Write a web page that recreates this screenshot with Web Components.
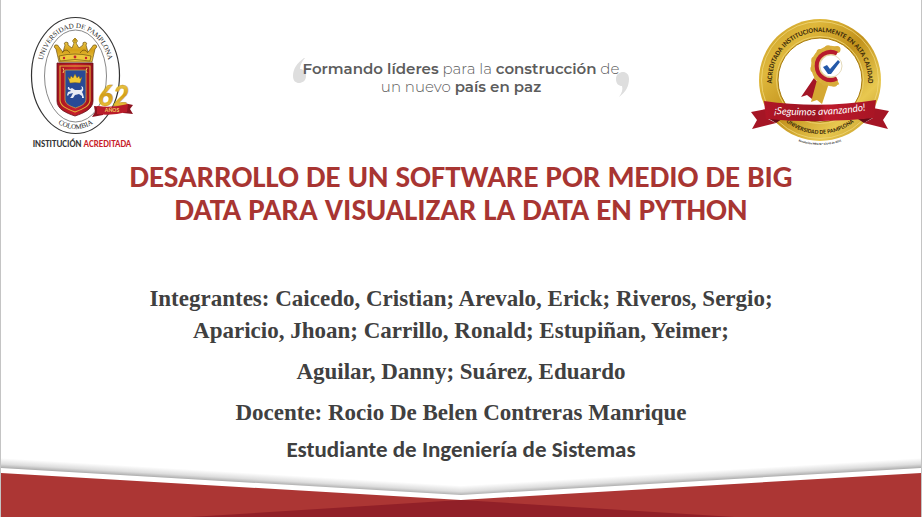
<!DOCTYPE html>
<html lang="es">
<head>
<meta charset="utf-8">
<title>Desarrollo de un software por medio de Big Data</title>
<style>
body{margin:0;background:#fff;font-family:"Liberation Serif",serif;color:#404040}
</style>
</head>
<body>
<title-slide>
  <slide-header slot="header">
    <university-crest></university-crest>
    <slide-motto><b>Formando líderes</b> para la <b>construcción</b> de<br>un nuevo <b>país en paz</b></slide-motto>
    <accreditation-seal></accreditation-seal>
  </slide-header>
  <slide-title>DESARROLLO DE UN SOFTWARE POR MEDIO DE BIG<br>DATA PARA VISUALIZAR LA DATA EN PYTHON</slide-title>
  <slide-credits>
    <p>Integrantes: Caicedo, Cristian; Arevalo, Erick; Riveros, Sergio;<br>Aparicio, Jhoan; Carrillo, Ronald; Estupiñan, Yeimer;</p>
    <p>Aguilar, Danny; Suárez, Eduardo</p>
    <p>Docente: Rocio De Belen Contreras Manrique</p>
    <span slot="role">Estudiante de Ingeniería de Sistemas</span>
  </slide-credits>
  <slide-footer slot="footer"></slide-footer>
</title-slide>
<script>
const define = (name, html) => customElements.define(name, class extends HTMLElement {
  constructor() {
    super();
    this.attachShadow({ mode: 'open' }).innerHTML = html;
  }
});

define('title-slide', `
<style>
:host{display:flex;flex-direction:column;min-height:100vh;box-sizing:border-box;border:solid #c4c4c4;border-width:0 1px;background:#fff}
main{flex:1}
</style>
<slot name="header"></slot><main><slot></slot></main><slot name="footer"></slot>`);

define('slide-header', `
<style>
:host{display:grid;grid-template-columns:1fr auto 1fr;align-items:start;padding:10px 24px 0}
::slotted(:last-child){justify-self:end}
</style>
<slot></slot>`);

define('slide-motto', `
<style>
:host{display:block;position:relative;isolation:isolate;margin-top:50px;padding:0 10px;text-align:center;font:300 15px/18px Montserrat,Inter,sans-serif;color:#5c5c5c}
::slotted(b){font-weight:600}
svg{position:absolute;width:14px;height:28px;fill:#dedede;z-index:-1}
.open{left:0;top:-3px}
.close{right:0;bottom:-2px}
</style>
<svg class="open" viewBox="0 0 14 28" aria-hidden="true"><path d="M11 1C4 6 0 12 0 19c0 5 3 7 6 7s7-2 7-7-3-7-6-7c0-4 2-8 5-11z"/></svg>
<slot></slot>
<svg class="close" viewBox="0 0 14 28" aria-hidden="true"><path d="M4 27c7-5 10-11 10-18 0-5-3-7-6-7S1 4 1 9s3 7 6 7c1 3 0 7-3 11z"/></svg>`);

define('university-crest', `
<style>:host{display:block}svg{display:block;width:115px;height:145px}</style>
<svg viewBox="25 10 115 145" role="img" aria-label="Universidad de Pamplona, 62 años">
<defs>
<linearGradient id="g" x1="0" x2="0" y1="0" y2="1"><stop offset="0" stop-color="#f6dc62"/><stop offset=".5" stop-color="#d4a018"/><stop offset="1" stop-color="#f0cd4a"/></linearGradient>
<linearGradient id="r" x1="0" x2="1" y1="0" y2="0"><stop offset="0" stop-color="#a31220"/><stop offset=".5" stop-color="#c8202c"/><stop offset="1" stop-color="#98101c"/></linearGradient>
<path id="up" d="M40.500 77A35 49 0 0 1 110.500 77"/>
<path id="dn" d="M36.500 76A39 53 0 0 0 114.500 76"/>
</defs>
<ellipse cx="75.500" cy="75.500" rx="44" ry="58" fill="#fff" stroke="#333" stroke-width="1.200"/>
<ellipse cx="75.500" cy="76" rx="31" ry="46" fill="#fff" stroke="#555" stroke-width=".7"/>
<g font-family="Liberation Serif,serif" font-size="7" fill="#222" text-anchor="middle">
<text><textPath href="#up" startOffset="50%">UNIVERSIDAD DE PAMPLONA</textPath></text>
<text><textPath href="#dn" startOffset="50%">COLOMBIA</textPath></text></g>
<path d="M57 63h36v38c0 8-9 12-18 15-9-3-18-7-18-15z" fill="url(#r)" stroke="#641018" stroke-width=".8"/>
<path d="M60 66h30v34c0 6-7 9-15 12-8-3-15-6-15-12z" fill="none" stroke="#e3b23a" stroke-width="1.100"/>
<path d="M63 68q2 3 0 5M87 68q-2 3 0 5" fill="none" stroke="#f0c860"/>
<path d="M65 70h21v29c0 5-5 7-10.500 9-6-2-10.500-4-10.500-9z" fill="#294a95" stroke="#d2a340" stroke-width=".8"/>
<g stroke="#5c4108" stroke-width=".6">
<path d="M59 62 56 49q-3-2-1-4 3-1 4 2l4 5 2-7q-2-2 1-3 3 0 2 3l4 3 2-5q-3-2 0-4l1-1 1 1q3 2 0 4l3 5 4-3q-1-3 2-3 3 1 1 3l2 7 4-5q1-3 4-2 2 2-1 4l-3 13z" fill="url(#g)"/>
<path d="M59 56q16-4 32 0l-1 5q-15-3-30 0z" fill="#edc73b"/>
<path d="M62 53q4-6 8 0M80 53q4-6 8 0" fill="none"/></g>
<path d="M75 38v5M73 40h4" stroke="#b88a12" stroke-width="1.200"/>
<g fill="#c4202e"><circle cx="64" cy="58" r="1.200"/><circle cx="75" cy="57" r="1.400"/><circle cx="86" cy="58" r="1.200"/></g>
<path d="m70 83-2-6 2 2 1-3 2 2 2-4 2 4 2-2 1 3 2-2-2 6q-5-1-10 0z" fill="#f2ca36" stroke="#8a6810" stroke-width=".4"/>
<path d="M70 90h-1q-2-1-1-3h1l1 2 2-1 3 2h5q2 0 2-2l-1-2 2 1q1 3-1 5l1 2 1 4h-2v-2l-3-2-4 1-2 3h-3l1-1 2-4-4 1-1 2-1-1 1-3 3-1z" fill="#e9ebf4"/>
<path d="m94 106 9 1v8l-11 2 3-5zM124 103l9 2-3 4 3 5-10-1z" fill="#8c1420"/>
<text x="98" y="106" font-family="Lato,sans-serif" font-size="28" font-weight="900" font-style="italic" fill="url(#g)" stroke="#b98512" stroke-width=".3">62</text>
<path d="m97 106q16 2 31-2l-1 8q-15 4-30 2z" fill="#b91c2a"/>
<text x="112" y="112" text-anchor="middle" font-family="Carlito,sans-serif" font-size="6" font-weight="700" fill="#f2c95c">AÑOS</text>
<text x="82" y="147" text-anchor="middle" font-family="Carlito,sans-serif" font-size="9" font-weight="700" fill="#333">INSTITUCIÓN <tspan fill="#c81e2c">ACREDITADA</tspan></text>
</svg>`);

define('accreditation-seal', `
<style>:host{display:block}svg{display:block;width:149px;height:140px}</style>
<svg viewBox="748 10 149 140" role="img" aria-label="Acreditada institucionalmente en alta calidad">
<defs>
<linearGradient id="g" x1="0" x2="1" y1="0" y2="1"><stop offset="0" stop-color="#c79a22"/><stop offset=".25" stop-color="#dfb83c"/><stop offset=".5" stop-color="#c2921c"/><stop offset=".75" stop-color="#e8c850"/><stop offset="1" stop-color="#b98d1c"/></linearGradient>
<linearGradient id="r" x1="0" x2="1" y1="0" y2="0"><stop offset="0" stop-color="#b01526"/><stop offset=".48" stop-color="#9c1322"/><stop offset=".55" stop-color="#bd1a2c"/><stop offset="1" stop-color="#a81524"/></linearGradient>
<path id="up" d="M772 90V80A48 48 0 0 1 868 80V90"/>
<path id="dn" d="M766 80A54 54 0 0 0 874 80"/>
<path id="lo" d="M755 80A65 65 0 0 0 885 80"/>
<path id="rb" d="M766 113q54 6 108-4"/>
</defs>
<circle cx="820" cy="80" r="61" fill="url(#g)"/>
<circle cx="820" cy="80" r="58.500" fill="none" stroke="#f0d778" stroke-width=".8"/>
<circle cx="820" cy="80" r="42" fill="#fff" stroke="#a87c12" stroke-width="1"/>
<circle cx="820" cy="80" r="43.500" fill="none" stroke="#ecd06c" stroke-width="1"/>
<g font-family="Carlito,sans-serif" font-weight="700" fill="#3c2a0a" text-anchor="middle">
<text font-size="7"><textPath href="#up" startOffset="50%">ACREDITADA INSTITUCIONALMENTE EN ALTA CALIDAD</textPath></text>
<text font-size="6"><textPath href="#dn" startOffset="50%">UNIVERSIDAD DE PAMPLONA</textPath></text>
<text font-size="3" fill="#222"><textPath href="#lo" startOffset="50%">Resolución MEN N.° 13143 de 2021</textPath></text></g>
<path d="m814 78-13 19 6-2 5 4 9-13z" fill="#a31526"/>
<path d="m817 80-6 22 6-2 5 4 7-21z" fill="#d5a833"/>
<path d="M838 50.500A17 17 0 1 0 838 81.500L831 66z" fill="#e9cf86"/>
<path d="M838 50.500A17 17 0 1 0 838 81.500" fill="none" stroke="#dbb03d" stroke-width="6"/>
<path d="M837 49.500A17.500 17.500 0 1 0 837 82.500" fill="none" stroke="#d8ac3a" stroke-width="7" stroke-linecap="round" stroke-dasharray="0 9"/>
<path d="M837 53.500A14 14 0 1 0 837 78.500" fill="none" stroke="#b71b2d" stroke-width="4"/>
<circle cx="831" cy="66" r="11" fill="#fff" stroke="#dccfa8" stroke-width=".8"/>
<path d="m823 67 4-2 3 4 8-9 2 2-9 12h-3z" fill="#2358a8"/>
<path d="m751 112 15-3v9l10 5-24 6 5-9zM889 111l-16-3v10l-9 5 24 6-5-9z" fill="#a51525"/>
<path d="m766 117 10 6 6-4zM874 117l-10 6-6-4z" fill="#650b16"/>
<path d="M764 101q56 8 112-1l-2 18q-54 6-108 1z" fill="url(#r)"/>
<text font-family="Lato,sans-serif" font-size="10" font-style="italic" fill="#fff" text-anchor="middle"><textPath href="#rb" startOffset="50%">¡Seguimos avanzando!</textPath></text>
</svg>`);

define('slide-title', `
<style>
:host{display:block}
h1{margin:5px 24px 0;text-align:center;font:700 31px/33px Carlito,Lato,sans-serif;color:#a83532}
</style>
<h1><slot></slot></h1>`);

define('slide-credits', `
<style>
:host{display:block;padding:57px 24px 0;text-align:center;font:700 23px/32px "Liberation Serif",serif}
::slotted(p){margin:0 0 9px}
div{font:700 23px/22px Carlito,Lato,sans-serif}
</style>
<slot></slot><div><slot name="role"></slot></div>`);

define('slide-footer', `
<style>:host{display:block}svg{display:block;width:100%;height:56px;overflow:visible}</style>
<svg viewBox="0 461 922 56" preserveAspectRatio="none" aria-hidden="true">
<defs>
<linearGradient id="l" gradientUnits="userSpaceOnUse" x1="0" y1="468" x2=".6" y2="458"><stop offset="0" stop-color="#aaa"/><stop offset=".4" stop-color="#ddd"/><stop offset="1" stop-color="#fff"/></linearGradient>
<linearGradient id="m" gradientUnits="userSpaceOnUse" x1="922" y1="468" x2="921.400" y2="458"><stop offset="0" stop-color="#aaa"/><stop offset=".4" stop-color="#ddd"/><stop offset="1" stop-color="#fff"/></linearGradient>
</defs>
<path d="M0 458 461 485V495L0 468z" fill="url(#l)"/>
<path d="M922 458 461 485V495L922 468z" fill="url(#m)"/>
<path d="M0 473 461 500 922 473V517H0z" fill="#ac3634"/>
<path d="M190 517 461 500 735 517z" fill="#912028"/>
</svg>`);
</script>
</body>
</html>
